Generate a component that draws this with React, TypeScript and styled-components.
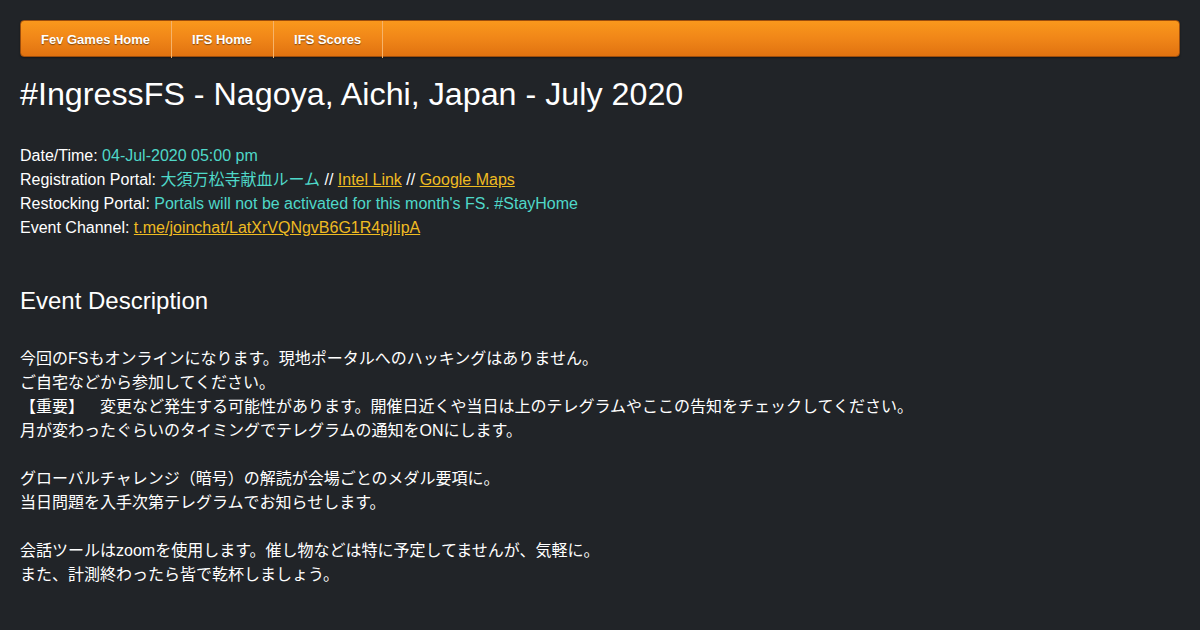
import styled, { createGlobalStyle } from "styled-components";

const GlobalStyle = createGlobalStyle`
  html, body {
    margin: 0;
    padding: 0;
    background: #212428;
  }
  body {
    font-family: "Liberation Sans", Arial, "Noto Sans CJK JP", sans-serif;
    color: #ffffff;
    text-spacing-trim: space-all;
  }
`;

const Page = styled.div`
  padding: 20px;
  min-height: 630px;
  box-sizing: border-box;
  background: #212428;
`;

const NavBar = styled.nav`
  display: flex;
  height: 37px;
  box-sizing: border-box;
  border: 1px solid #9c4d0c;
  border-radius: 4px;
  background: linear-gradient(to bottom, #fa981c 0%, #f08618 50%, #e07210 100%);
  box-shadow: 0 1px 2px rgba(0, 0, 0, 0.4);
`;

const NavItem = styled.a`
  display: flex;
  align-items: center;
  padding: 0 21px 0 20px;
  margin-bottom: -2px;
  border-right: 1px solid #f6b36a;
  font-size: 13px;
  font-weight: bold;
  color: #ffffff;
  text-decoration: none;
  text-shadow: 0 1px 1px rgba(0, 0, 0, 0.45);
`;

const Title = styled.h1`
  margin: 18px 0 0;
  font-size: 32.25px;
  font-weight: normal;
  line-height: 38px;
`;

const InfoBlock = styled.div`
  margin-top: 31px;
  font-size: 16px;
  line-height: 24px;
`;

const Accent = styled.span`
  color: #4fd8c8;
`;

const Link = styled.a`
  color: #efbb22;
  text-decoration: underline;
`;

const SectionTitle = styled.h2`
  margin: 46px 0 0;
  font-size: 24px;
  font-weight: normal;
  line-height: 30px;
`;

const Description = styled.div`
  margin-top: 31px;
  font-size: 16px;
  line-height: 24px;
  text-spacing-trim: space-all;
`;

const Para = styled.p`
  margin: 0 0 24px;
`;

export default function App() {
  return (
    <>
      <GlobalStyle />
      <Page>
        <NavBar>
          <NavItem href="#">Fev Games Home</NavItem>
          <NavItem href="#">IFS Home</NavItem>
          <NavItem href="#">IFS Scores</NavItem>
        </NavBar>

        <Title>#IngressFS - Nagoya, Aichi, Japan - July 2020</Title>

        <InfoBlock>
          Date/Time: <Accent>04-Jul-2020 05:00 pm</Accent>
          <br />
          Registration Portal: <Accent>大須万松寺献血ルーム</Accent> // <Link href="#">Intel Link</Link> //{" "}
          <Link href="#">Google Maps</Link>
          <br />
          Restocking Portal: <Accent>Portals will not be activated for this month's FS. #StayHome</Accent>
          <br />
          Event Channel: <Link href="#">t.me/joinchat/LatXrVQNgvB6G1R4pjIipA</Link>
        </InfoBlock>

        <SectionTitle>Event Description</SectionTitle>

        <Description>
          <Para>
            今回のFSもオンラインになります。現地ポータルへのハッキングはありません。
            <br />
            ご自宅などから参加してください。
            <br />
            【重要】　変更など発生する可能性があります。開催日近くや当日は上のテレグラムやここの告知をチェックしてください。
            <br />
            月が変わったぐらいのタイミングでテレグラムの通知をONにします。
          </Para>
          <Para>
            グローバルチャレンジ（暗号）の解読が会場ごとのメダル要項に。
            <br />
            当日問題を入手次第テレグラムでお知らせします。
          </Para>
          <Para>
            会話ツールはzoomを使用します。催し物などは特に予定してませんが、気軽に。
            <br />
            また、計測終わったら皆で乾杯しましょう。
          </Para>
        </Description>
      </Page>
    </>
  );
}
